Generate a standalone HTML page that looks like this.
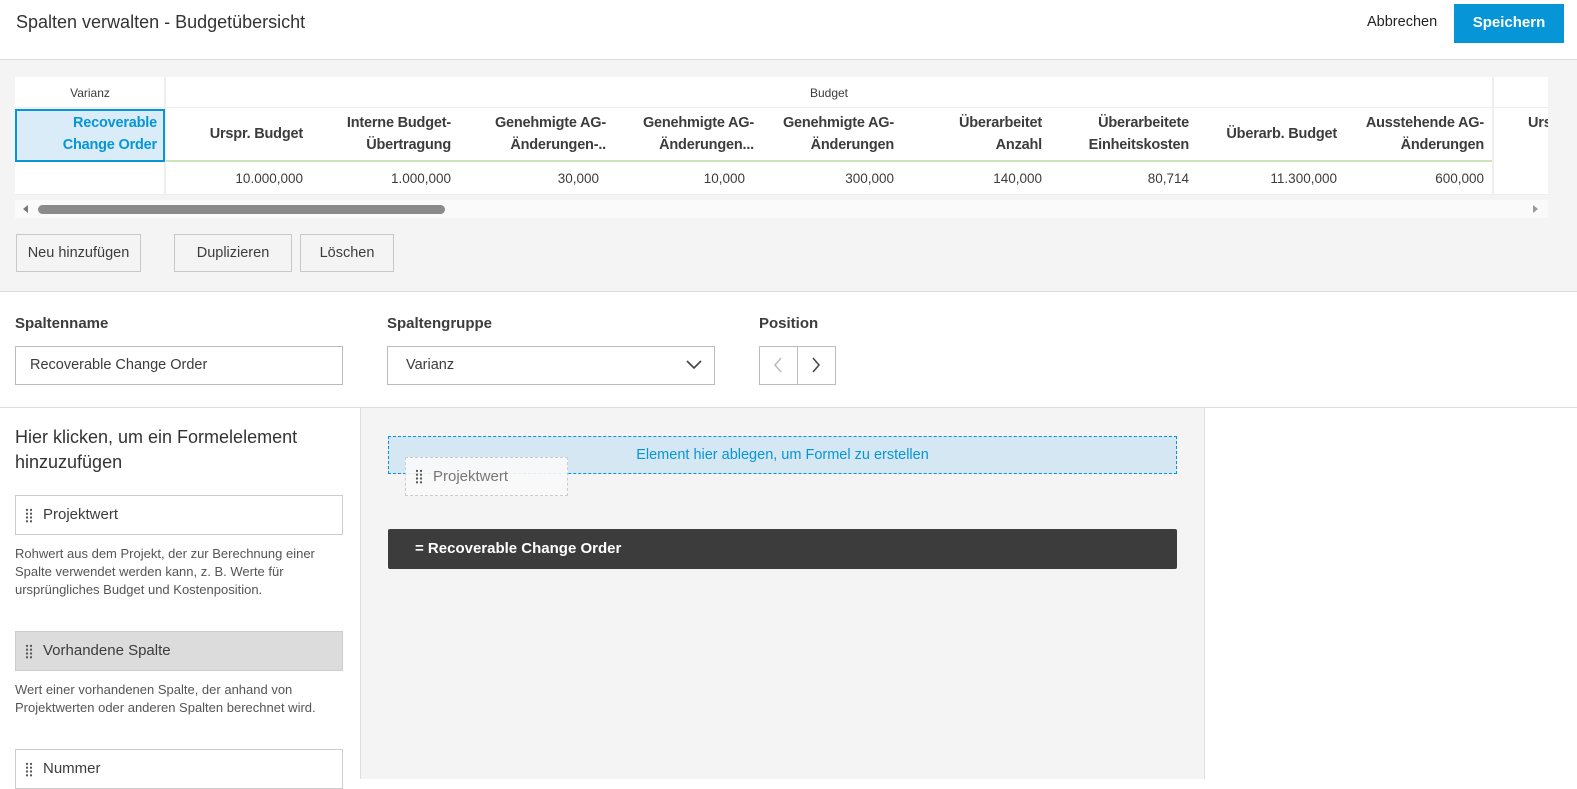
<!DOCTYPE html>
<html><head><meta charset="utf-8"><style>
*{margin:0;padding:0;box-sizing:border-box}
body{width:1577px;height:779px;overflow:hidden;background:#fff;font-family:"Liberation Sans",sans-serif;color:#3c3c3c;position:relative}
.a{position:absolute}
.hd{font-weight:bold;font-size:14.5px;color:#3c3c3c;text-align:right;line-height:22px;letter-spacing:-0.2px}
.num{font-size:13.5px;color:#3c3c3c;text-align:right}
.btn{position:absolute;top:234px;height:38px;border:1px solid #c8c8c8;background:#f4f4f4;font-size:14.5px;line-height:36px;text-align:center;color:#3c3c3c}
.lbl{position:absolute;top:315px;font-weight:bold;font-size:15px;color:#3c3c3c}
.inp{position:absolute;top:346px;height:39px;border:1px solid #bbb;background:#fff;font-size:14.5px;line-height:37px}
.card{position:absolute;left:15px;width:328px;height:40px;border:1px solid #ccc;background:#fff;font-size:15px;line-height:38px;padding-left:27px}
.card i{position:absolute;left:9px;top:12px;width:8px;height:15px;background-image:radial-gradient(circle,#555 1px,transparent 1.3px);background-size:4px 3.8px}
.desc{position:absolute;left:15px;width:322px;font-size:13px;line-height:18px;color:#555}
</style></head><body>
<div class="a" style="left:16px;top:12px;font-size:18px;color:#333">Spalten verwalten - Budgetübersicht</div>
<div class="a" style="left:1367px;top:14px;font-size:14.5px;color:#222">Abbrechen</div>
<div class="a" style="left:1454px;top:4px;width:110px;height:39px;background:#0696d7;color:#fff;font-weight:bold;font-size:15px;line-height:38px;text-align:center">Speichern</div>
<div class="a" style="left:0;top:59px;width:1577px;height:233px;background:#f4f4f4;border-top:1px solid #ddd;border-bottom:1px solid #ddd"></div>
<div class="a" style="left:15px;top:77px;width:1533px;height:118px;background:#fff"></div>
<div class="a" style="left:164px;top:77px;width:2px;height:118px;background:#eee"></div>
<div class="a" style="left:1492px;top:77px;width:2px;height:118px;background:#eee"></div>
<div class="a" style="left:15px;top:107px;width:1533px;height:1px;background:#eee"></div>
<div class="a" style="left:15px;top:194px;width:1533px;height:1px;background:#eee"></div>
<div class="a" style="left:166px;top:160px;width:1326px;height:2px;background:#cde3b8"></div>
<div class="a" style="left:15px;top:86px;width:150px;text-align:center;font-size:12px">Varianz</div>
<div class="a" style="left:166px;top:86px;width:1326px;text-align:center;font-size:12px">Budget</div>
<div class="a" style="left:15px;top:109px;width:150px;height:53px;border:2px solid #0696d7;background:#d9ecf8"></div>
<div class="a hd" style="left:20px;top:112px;width:137px;color:#0696d7">Recoverable<br>Change Order</div>
<div class="a hd" style="left:166px;top:123px;width:137px">Urspr. Budget</div>
<div class="a hd" style="left:310px;top:112px;width:141px">Interne Budget-<br>Übertragung</div>
<div class="a hd" style="left:458px;top:112px;width:148px">Genehmigte AG-<br>Änderungen-..</div>
<div class="a hd" style="left:606px;top:112px;width:148px">Genehmigte AG-<br>Änderungen...</div>
<div class="a hd" style="left:754px;top:112px;width:140px">Genehmigte AG-<br>Änderungen</div>
<div class="a hd" style="left:900px;top:112px;width:142px">Überarbeitet<br>Anzahl</div>
<div class="a hd" style="left:1046px;top:112px;width:143px">Überarbeitete<br>Einheitskosten</div>
<div class="a hd" style="left:1195px;top:123px;width:142px">Überarb. Budget</div>
<div class="a hd" style="left:1340px;top:112px;width:144px">Ausstehende AG-<br>Änderungen</div>
<div class="a hd" style="left:1500px;top:112px;width:48px;overflow:hidden;text-align:left;padding-left:28px">Urs</div>
<div class="a num" style="left:166px;top:171px;width:137px">10.000,000</div>
<div class="a num" style="left:310px;top:171px;width:141px">1.000,000</div>
<div class="a num" style="left:458px;top:171px;width:141px">30,000</div>
<div class="a num" style="left:606px;top:171px;width:139px">10,000</div>
<div class="a num" style="left:754px;top:171px;width:140px">300,000</div>
<div class="a num" style="left:900px;top:171px;width:142px">140,000</div>
<div class="a num" style="left:1046px;top:171px;width:143px">80,714</div>
<div class="a num" style="left:1195px;top:171px;width:142px">11.300,000</div>
<div class="a num" style="left:1340px;top:171px;width:144px">600,000</div>
<div class="a" style="left:15px;top:200px;width:1533px;height:18px;background:#fafafa"></div>
<div class="a" style="left:38px;top:205px;width:407px;height:9px;border-radius:5px;background:#8a8a8a"></div>
<div class="a" style="left:23px;top:205px;width:0;height:0;border:4px solid transparent;border-right:5px solid #777;border-left:0"></div>
<div class="a" style="left:1533px;top:205px;width:0;height:0;border:4px solid transparent;border-left:5px solid #999;border-right:0"></div>
<div class="btn" style="left:16px;width:125px">Neu hinzufügen</div>
<div class="btn" style="left:174px;width:118px">Duplizieren</div>
<div class="btn" style="left:300px;width:94px">Löschen</div>
<div class="lbl" style="left:15px">Spaltenname</div>
<div class="lbl" style="left:387px">Spaltengruppe</div>
<div class="lbl" style="left:759px">Position</div>
<div class="inp" style="left:15px;width:328px;padding-left:14px">Recoverable Change Order</div>
<div class="inp" style="left:387px;width:328px;padding-left:18px">Varianz
<svg class="a" style="left:298px;top:13px" width="16" height="10"><path d="M1 1l7 7 7-7" fill="none" stroke="#444" stroke-width="1.6"/></svg></div>
<div class="inp" style="left:759px;width:77px"></div>
<div class="a" style="left:797px;top:347px;width:1px;height:37px;background:#bbb"></div>
<svg class="a" style="left:773px;top:357px" width="10" height="16"><path d="M8 1L2 8l6 7" fill="none" stroke="#bbb" stroke-width="1.5"/></svg>
<svg class="a" style="left:811px;top:357px" width="10" height="16"><path d="M2 1l6 7-6 7" fill="none" stroke="#444" stroke-width="1.5"/></svg>
<div class="a" style="left:0;top:407px;width:1577px;height:1px;background:#ddd"></div>
<div class="a" style="left:360px;top:408px;width:845px;height:371px;background:#f4f4f4;border-left:1px solid #ddd;border-right:1px solid #ddd"></div>
<div class="a" style="left:15px;top:425px;font-size:18px;line-height:25px;color:#333">Hier klicken, um ein Formelelement<br>hinzuzufügen</div>
<div class="card" style="top:495px"><i></i>Projektwert</div>
<div class="desc" style="top:545px">Rohwert aus dem Projekt, der zur Berechnung einer<br>Spalte verwendet werden kann, z. B. Werte für<br>ursprüngliches Budget und Kostenposition.</div>
<div class="card" style="top:631px;background:#dcdcdc"><i></i>Vorhandene Spalte</div>
<div class="desc" style="top:681px">Wert einer vorhandenen Spalte, der anhand von<br>Projektwerten oder anderen Spalten berechnet wird.</div>
<div class="card" style="top:749px"><i></i>Nummer</div>
<div class="a" style="left:388px;top:436px;width:789px;height:38px;background:#d4e7f3;border:1px dashed #0696d7;color:#0696d7;font-size:14.5px;text-align:center;line-height:36px">Element hier ablegen, um Formel zu erstellen</div>
<div class="card" style="left:405px;top:457px;width:163px;height:39px;background:rgba(250,250,250,.9);border:1px dashed #ccc;color:#777;line-height:37px"><i style="top:11px"></i>Projektwert</div>
<div class="a" style="left:388px;top:529px;width:789px;height:40px;background:#3c3c3c;border-radius:2px;color:#fff;font-weight:bold;font-size:15px;line-height:40px;padding-left:27px">= Recoverable Change Order</div>
</body></html>
